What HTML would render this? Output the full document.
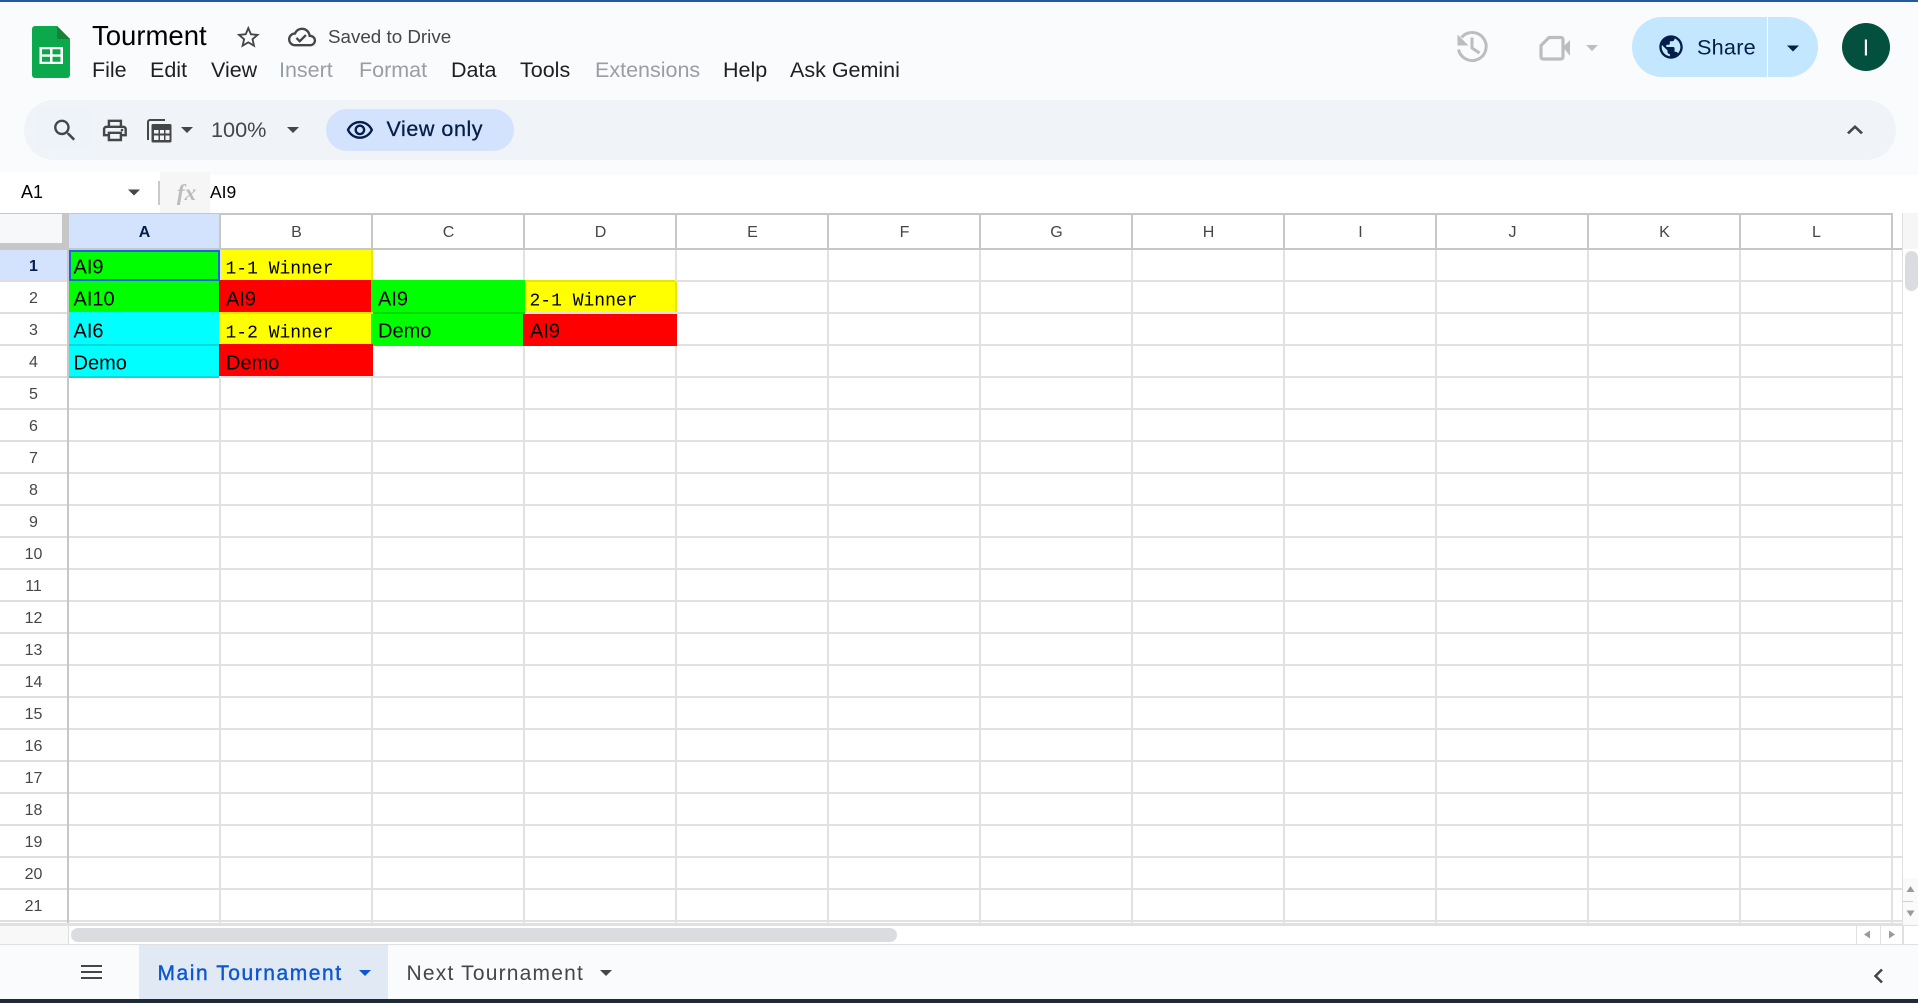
<!DOCTYPE html>
<html lang="en"><head><meta charset="utf-8"><title>Tourment</title>
<style>
html,body{margin:0;padding:0;width:1918px;height:1003px;overflow:hidden;background:#f9fbfd;font-family:"Liberation Sans",sans-serif}
.a{position:absolute}
svg text{font-family:"Liberation Sans",sans-serif}
.m{font-size:21.5px;fill:#1f1f1f}.d{fill:#9a9da3}
.h{font-size:16px;fill:#444746;text-anchor:middle}
.c{font-size:20px;fill:#000}
.w{font-family:"Liberation Mono",monospace!important;font-size:18px;fill:#000}
</style></head><body>
<div class="a" style="left:0;top:0;width:1918px;height:2px;background:#235b9c"></div>
<div class="a" style="left:24px;top:100px;width:1872px;height:60px;border-radius:30px;background:#f0f3f8"></div>
<div class="a" style="left:38px;top:109px;width:55px;height:41px;background:#eef2f9"></div>
<div class="a" style="left:326px;top:109px;width:188px;height:42px;border-radius:21px;background:#d3e3fd"></div>
<div class="a" style="left:1632px;top:17px;width:186px;height:60px;border-radius:30px;background:#c2e7ff"></div>
<div class="a" style="left:1767px;top:17px;width:1px;height:60px;background:#fff"></div>
<div class="a" style="left:1842px;top:23px;width:48px;height:48px;border-radius:50%;background:#03503f"></div>

<!-- formula bar -->
<div class="a" style="left:0;top:175px;width:1918px;height:38px;background:#fff"></div>
<div class="a" style="left:0;top:172px;width:160px;height:4px;background:#fff"></div>
<div class="a" style="left:160px;top:172px;width:50px;height:41px;background:#f6f6f6"></div>
<div class="a" style="left:158px;top:181px;width:2px;height:24px;background:#c9c9c9"></div>

<!-- grid -->
<div class="a" style="left:0;top:213px;width:1903px;height:712px;background:#fff"></div>
<div class="a" style="left:69px;top:250px;width:1834px;height:675px;background-image:repeating-linear-gradient(90deg,transparent 0,transparent 150px,#e1e1e1 150px,#e1e1e1 152px),repeating-linear-gradient(180deg,transparent 0,transparent 30px,#e1e1e1 30px,#e1e1e1 32px)"></div>
<div class="a" style="left:0;top:250px;width:67px;height:675px;background-image:repeating-linear-gradient(180deg,transparent 0,transparent 30px,#dedede 30px,#dedede 32px)"></div>
<div class="a" style="left:1893px;top:214px;width:10px;height:711px;background:#fff"></div>
<div class="a" style="left:1893px;top:250px;width:9px;height:675px;background-image:repeating-linear-gradient(180deg,transparent 0,transparent 30px,#e1e1e1 30px,#e1e1e1 32px)"></div>
<!-- header lines -->
<div class="a" style="left:0;top:213px;width:1893px;height:1.5px;background:#c7c7c7"></div>
<div class="a" style="left:0;top:248px;width:1903px;height:2px;background:#c7c7c7"></div>
<div class="a" style="left:0;top:214px;width:62px;height:29px;background:#f7f8fa"></div>
<div class="a" style="left:62px;top:214px;width:5px;height:34px;background:#c7c7c7"></div>
<div class="a" style="left:0;top:243px;width:67px;height:5px;background:#c7c7c7"></div>
<div class="a" style="left:67px;top:214px;width:2px;height:711px;background:#c7c7c7"></div>
<div class="a" style="left:219px;top:214px;width:2px;height:34px;background:#c7c7c7"></div>
<div class="a" style="left:371px;top:214px;width:2px;height:34px;background:#c7c7c7"></div>
<div class="a" style="left:523px;top:214px;width:2px;height:34px;background:#c7c7c7"></div>
<div class="a" style="left:675px;top:214px;width:2px;height:34px;background:#c7c7c7"></div>
<div class="a" style="left:827px;top:214px;width:2px;height:34px;background:#c7c7c7"></div>
<div class="a" style="left:979px;top:214px;width:2px;height:34px;background:#c7c7c7"></div>
<div class="a" style="left:1131px;top:214px;width:2px;height:34px;background:#c7c7c7"></div>
<div class="a" style="left:1283px;top:214px;width:2px;height:34px;background:#c7c7c7"></div>
<div class="a" style="left:1435px;top:214px;width:2px;height:34px;background:#c7c7c7"></div>
<div class="a" style="left:1587px;top:214px;width:2px;height:34px;background:#c7c7c7"></div>
<div class="a" style="left:1739px;top:214px;width:2px;height:34px;background:#c7c7c7"></div>
<div class="a" style="left:1891px;top:214px;width:2px;height:34px;background:#c7c7c7"></div>
<div class="a" style="left:69px;top:214px;width:150px;height:34px;background:#d3e3fd"></div>
<div class="a" style="left:0;top:250px;width:67px;height:30px;background:#d3e3fd"></div>

<!-- coloured cells -->
<div class="a" style="left:69px;top:250px;width:151px;height:32px;background:#0f0"></div>
<div class="a" style="left:221px;top:250px;width:150px;height:30px;background:#ff0;border-right:2px solid #e6e600"></div>
<div class="a" style="left:69px;top:282px;width:150px;height:30px;background:#0f0;border-bottom:2px solid #00dc00"></div>
<div class="a" style="left:219px;top:280px;width:152px;height:32px;background:#f00"></div>
<div class="a" style="left:371px;top:280px;width:154px;height:32px;background:#0f0;border-bottom:2px solid #00dc00"></div>
<div class="a" style="left:525px;top:280px;width:150px;height:2px;background:#e6e600"></div>
<div class="a" style="left:525px;top:282px;width:150px;height:30px;background:#ff0;border-right:2px solid #e6e600"></div>
<div class="a" style="left:69px;top:314px;width:150px;height:30px;background:#0ff;border-bottom:2px solid #00dcdc"></div>
<div class="a" style="left:69px;top:312px;width:150px;height:2px;background:#0ff"></div>
<div class="a" style="left:219px;top:312px;width:152px;height:32px;background:#ff0;border-right:2px solid #e6e600"></div>
<div class="a" style="left:219px;top:312px;width:152px;height:2px;background:#e6e600"></div>
<div class="a" style="left:371px;top:314px;width:152px;height:32px;background:#0f0"></div>
<div class="a" style="left:523px;top:314px;width:154px;height:32px;background:#f00"></div>
<div class="a" style="left:69px;top:346px;width:150px;height:30px;background:#0ff;border-bottom:2px solid #00dcdc"></div>
<div class="a" style="left:219px;top:344px;width:154px;height:32px;background:#f00"></div>
<div class="a" style="left:69px;top:250px;width:147px;height:27px;border:2px solid #1a66d8"></div>

<!-- bottom area -->
<div class="a" style="left:0;top:923px;width:1903px;height:2px;background:#e1e1e1"></div>
<div class="a" style="left:0;top:925px;width:1918px;height:19px;background:#fff"></div>
<div class="a" style="left:0;top:925px;width:68px;height:19px;background:#f8f8f8"></div>
<div class="a" style="left:68px;top:925px;width:1px;height:19px;background:#ddd"></div>
<div class="a" style="left:71px;top:928px;width:826px;height:14px;border-radius:7px;background:#dadce0"></div>
<div class="a" style="left:1856px;top:925px;width:1px;height:19px;background:#e0e0e0"></div>
<div class="a" style="left:1880px;top:925px;width:1px;height:19px;background:#e0e0e0"></div>
<div class="a" style="left:1903px;top:925px;width:1px;height:19px;background:#e0e0e0"></div>
<div class="a" style="left:0;top:925px;width:1918px;height:1px;background:#e0e0e0"></div>
<div class="a" style="left:0;top:944px;width:1918px;height:1px;background:#e0e0e0"></div>
<!-- right scroll -->
<div class="a" style="left:1903px;top:175px;width:15px;height:750px;background:#fff"></div>
<div class="a" style="left:1903px;top:213px;width:15px;height:36px;background:#f6f6f6"></div>
<div class="a" style="left:1902px;top:213px;width:1px;height:731px;background:#e0e0e0"></div>
<div class="a" style="left:1905px;top:251px;width:13px;height:40px;border-radius:7px;background:#dadce0"></div>
<div class="a" style="left:1903px;top:878px;width:15px;height:47px;background:#fafafa"></div>
<div class="a" style="left:1903px;top:901px;width:10px;height:1px;background:#c8cfe8"></div>
<!-- tab bar -->
<div class="a" style="left:139px;top:945px;width:249px;height:54px;background:#e1e9f5"></div>
<div class="a" style="left:0;top:999px;width:1918px;height:4px;background:#1f2a38"></div>
<div class="a" style="left:81px;top:965px;width:21px;height:2px;background:#444746"></div>
<div class="a" style="left:81px;top:971px;width:21px;height:2px;background:#444746"></div>
<div class="a" style="left:81px;top:977px;width:21px;height:2px;background:#444746"></div>

<svg class="a" style="left:0;top:0" width="1918" height="1003" viewBox="0 0 1918 1003">
<!-- logo -->
<path d="M35 26H57L70 39V75a3 3 0 0 1-3 3H35a3 3 0 0 1-3-3V29a3 3 0 0 1 3-3z" fill="#0ca84c"/>
<path d="M57 26L70 39H57z" fill="#188038"/>
<path d="M39.500 47H63V64H39.500zM42 49.300V54.400H50V49.300zM52.500 49.300V54.400H60.500V49.300zM42 56.700V61.700H50V56.700zM52.500 56.700V61.700H60.500V56.700z" fill="#fff" fill-rule="evenodd"/>

<text x="92" y="45" font-size="27.500" fill="#000">Tourment</text>
<path transform="translate(234.500,23.500) scale(1.15)" fill="#444746" d="M22 9.240l-7.190-.62L12 2 9.190 8.630 2 9.240l5.460 4.730L5.820 21 12 17.270 18.180 21l-1.630-7.030L22 9.240zM12 15.400l-3.760 2.270 1-4.280-3.320-2.880 4.380-.38L12 6.100l1.710 4.040 4.380.38-3.320 2.880 1 4.280L12 15.400z"/>
<path transform="translate(288,23) scale(1.17)" fill="#444746" d="M19.350 10.040C18.670 6.590 15.640 4 12 4 9.110 4 6.600 5.640 5.350 8.040 2.340 8.360 0 10.910 0 14c0 3.310 2.690 6 6 6h13c2.760 0 5-2.240 5-5 0-2.640-2.050-4.780-4.650-4.960zM19 18H6c-2.210 0-4-1.790-4-4 0-2.050 1.530-3.760 3.560-3.970l1.070-.11.5-.95C8.080 7.140 9.940 6 12 6c2.620 0 4.880 1.860 5.390 4.430l.3 1.500 1.530.11c1.560.1 2.780 1.410 2.780 2.960 0 1.650-1.350 3-3 3zm-9-3.820l-2.090-2.090L6.500 13.500 10 17l6.010-6.010-1.410-1.410z"/>
<text x="328" y="43" font-size="18.800" fill="#444746">Saved to Drive</text>

<text class="m" x="92" y="77">File</text>
<text class="m" x="150" y="77">Edit</text>
<text class="m" x="211" y="77">View</text>
<text class="m d" x="279" y="77">Insert</text>
<text class="m d" x="359" y="77">Format</text>
<text class="m" x="451" y="77">Data</text>
<text class="m" x="520" y="77">Tools</text>
<text class="m d" x="595" y="77">Extensions</text>
<text class="m" x="723" y="77">Help</text>
<text class="m" x="790" y="77">Ask Gemini</text>

<!-- toolbar icons -->
<path transform="translate(50.500,116) scale(1.2)" fill="#444746" d="M15.500 14h-.79l-.28-.27C15.410 12.590 16 11.110 16 9.500 16 5.910 13.090 3 9.500 3S3 5.910 3 9.500 5.910 16 9.500 16c1.610 0 3.090-.59 4.230-1.570l.27.28v.79l5 4.990L20.490 19l-4.990-5zm-6 0C7.010 14 5 11.990 5 9.500S7.010 5 9.500 5 14 7.010 14 9.500 11.990 14 9.500 14z"/>
<path transform="translate(100.500,116) scale(1.2)" fill="#444746" d="M19 8h-1V3H6v5H5c-1.660 0-3 1.340-3 3v6h4v4h12v-4h4v-6c0-1.660-1.340-3-3-3zM8 5h8v3H8V5zm8 12v2H8v-4h8v2zm2-2v-2H6v2H4v-4c0-.55.45-1 1-1h14c.55 0 1 .45 1 1v4h-2z"/>
<circle cx="122" cy="130" r="1.300" fill="#444746"/>
<path d="M148 140V122a2 2 0 0 1 2-2H165" fill="none" stroke="#444746" stroke-width="2"/>
<path d="M153 124H170a1.500 1.500 0 0 1 1.500 1.500V141a1.500 1.500 0 0 1-1.500 1.500H153a1.500 1.500 0 0 1-1.500-1.500V125.500a1.500 1.500 0 0 1 1.500-1.500zM154 130V133.500H158.500V130zM160 130V133.500H164V130zM165.500 130V133.500H169.500V130zM154 135.500V140H158.500V135.500zM160 135.500V140H164V135.500zM165.500 135.500V140H169.500V135.500z" fill="#444746" fill-rule="evenodd"/>
<path d="M181 127h12l-6 6z" fill="#444746"/>
<text x="211" y="137" font-size="21.700" fill="#444746">100%</text>
<path d="M287 127h12l-6 6z" fill="#444746"/>
<path transform="translate(345.500,115.500) scale(1.2)" fill="#041e49" d="M12 6.500c3.790 0 7.170 2.130 8.820 5.500-1.650 3.370-5.020 5.500-8.820 5.500S4.830 15.370 3.180 12C4.830 8.630 8.210 6.500 12 6.500m0-2C7 4.500 2.730 7.610 1 12c1.730 4.390 6 7.500 11 7.500s9.270-3.110 11-7.500c-1.730-4.390-6-7.500-11-7.500zm0 5c1.380 0 2.500 1.120 2.500 2.500s-1.120 2.500-2.500 2.500-2.500-1.120-2.500-2.500 1.120-2.500 2.500-2.500m0-2c-2.480 0-4.500 2.020-4.500 4.500s2.020 4.500 4.500 4.500 4.500-2.020 4.500-4.500-2.020-4.500-4.500-4.500z"/>
<text x="386.500" y="136" font-size="21.500" fill="#041e49" stroke="#041e49" stroke-width=".3" letter-spacing=".55">View only</text>
<path transform="translate(1838,111)" fill="#444746" d="M9 21.500L17 14l8 7.500-2 1.700L17 17.500l-6 5.700z" />

<!-- right header -->
<path d="M1461.500 37.500A14 14 0 1 1 1458.500 49.500" fill="none" stroke="#bdbdbd" stroke-width="3"/>
<path d="M1457.500 34.500V45.500H1468.500z" fill="#bdbdbd"/>
<path d="M1472 37.500V48l7.500 5" fill="none" stroke="#bdbdbd" stroke-width="3"/>
<path d="M1549 37.500H1561a2 2 0 0 1 2 2V57a2 2 0 0 1-2 2H1543a2 2 0 0 1-2-2V45.500z" fill="none" stroke="#bdbdbd" stroke-width="3.200" stroke-linejoin="round"/>
<path d="M1563 47l7-7V56z" fill="#bdbdbd"/>
<path d="M1586 45h12l-6 6z" fill="#bdbdbd"/>
<path transform="translate(1657,33) scale(1.17)" fill="#041e49" d="M12 2C6.480 2 2 6.480 2 12s4.480 10 10 10 10-4.480 10-10S17.520 2 12 2zm-1 17.930c-3.950-.49-7-3.850-7-7.930 0-.62.08-1.210.21-1.790L9 15v1c0 1.100.9 2 2 2v1.930zm6.900-2.540c-.26-.81-1-1.390-1.900-1.390h-1v-3c0-.55-.45-1-1-1H8v-2h2c.55 0 1-.45 1-1V7h2c1.100 0 2-.9 2-2v-.41c2.930 1.190 5 4.060 5 7.410 0 2.080-.8 3.970-2.100 5.390z"/>
<text x="1697" y="54.500" font-size="21.700" fill="#041e49" letter-spacing=".2">Share</text>
<path d="M1787 45.500h12l-6 6z" fill="#041e49"/>
<text x="1866" y="55.500" font-size="23" fill="#fff" text-anchor="middle">I</text>

<!-- formula -->
<text x="21" y="198" font-size="18" fill="#000">A1</text>
<path d="M128 189.500h12l-6 6z" fill="#444746"/>
<text x="186.500" y="200" font-size="23" font-style="italic" font-weight="bold" text-anchor="middle" fill="#bcbcbc" style="font-family:'Liberation Serif',serif">fx</text>
<text x="210" y="198" font-size="17.500" fill="#000">AI9</text>

<!-- column letters -->
<text class="h" x="144.500" y="237" style="font-weight:bold;fill:#041e49">A</text>
<text class="h" x="296.500" y="237">B</text>
<text class="h" x="448.500" y="237">C</text>
<text class="h" x="600.500" y="237">D</text>
<text class="h" x="752.500" y="237">E</text>
<text class="h" x="904.500" y="237">F</text>
<text class="h" x="1056.500" y="237">G</text>
<text class="h" x="1208.500" y="237">H</text>
<text class="h" x="1360.500" y="237">I</text>
<text class="h" x="1512.500" y="237">J</text>
<text class="h" x="1664.500" y="237">K</text>
<text class="h" x="1816.500" y="237">L</text>
<!-- row numbers -->
<text class="h" x="33.500" y="271" style="font-weight:bold;fill:#041e49">1</text>
<text class="h" x="33.500" y="303">2</text>
<text class="h" x="33.500" y="335">3</text>
<text class="h" x="33.500" y="367">4</text>
<text class="h" x="33.500" y="399">5</text>
<text class="h" x="33.500" y="431">6</text>
<text class="h" x="33.500" y="463">7</text>
<text class="h" x="33.500" y="495">8</text>
<text class="h" x="33.500" y="527">9</text>
<text class="h" x="33.500" y="559">10</text>
<text class="h" x="33.500" y="591">11</text>
<text class="h" x="33.500" y="623">12</text>
<text class="h" x="33.500" y="655">13</text>
<text class="h" x="33.500" y="687">14</text>
<text class="h" x="33.500" y="719">15</text>
<text class="h" x="33.500" y="751">16</text>
<text class="h" x="33.500" y="783">17</text>
<text class="h" x="33.500" y="815">18</text>
<text class="h" x="33.500" y="847">19</text>
<text class="h" x="33.500" y="879">20</text>
<text class="h" x="33.500" y="911">21</text>
<!-- cells -->
<text class="c" x="73.500" y="273.500">AI9</text>
<text class="w" x="225.500" y="273.500">1-1 Winner</text>
<text class="c" x="73.500" y="305.500">AI10</text>
<text class="c" x="226" y="305.500">AI9</text>
<text class="c" x="378" y="305.500">AI9</text>
<text class="w" x="529.500" y="305.500">2-1 Winner</text>
<text class="c" x="73.500" y="337.500">AI6</text>
<text class="w" x="225.500" y="337.500">1-2 Winner</text>
<text class="c" x="378" y="337.500">Demo</text>
<text class="c" x="530" y="337.500">AI9</text>
<text class="c" x="73.500" y="369.500">Demo</text>
<text class="c" x="226" y="369.500">Demo</text>

<!-- scroll arrows -->
<path d="M1910.500 886l4 6h-8z" fill="#9a9a9a"/>
<path d="M1910.500 916.500l4-6h-8z" fill="#9a9a9a"/>
<path d="M1864 934.500l6-4v8z" fill="#9a9a9a"/>
<path d="M1895 934.500l-6-4v8z" fill="#9a9a9a"/>

<!-- tabs -->
<text x="157.500" y="980" font-size="21" fill="#0b57d0" stroke="#0b57d0" stroke-width=".4" letter-spacing="1.550">Main Tournament</text>
<path d="M359 970h12l-6 6z" fill="#0b57d0"/>
<text x="406.500" y="980" font-size="21" fill="#444746" letter-spacing="1.200">Next Tournament</text>
<path d="M600 970h12l-6 6z" fill="#444746"/>
<path d="M1882 969.500l-6.500 6.500 6.500 6.500" fill="none" stroke="#444746" stroke-width="2.500"/>
</svg>
</body></html>
